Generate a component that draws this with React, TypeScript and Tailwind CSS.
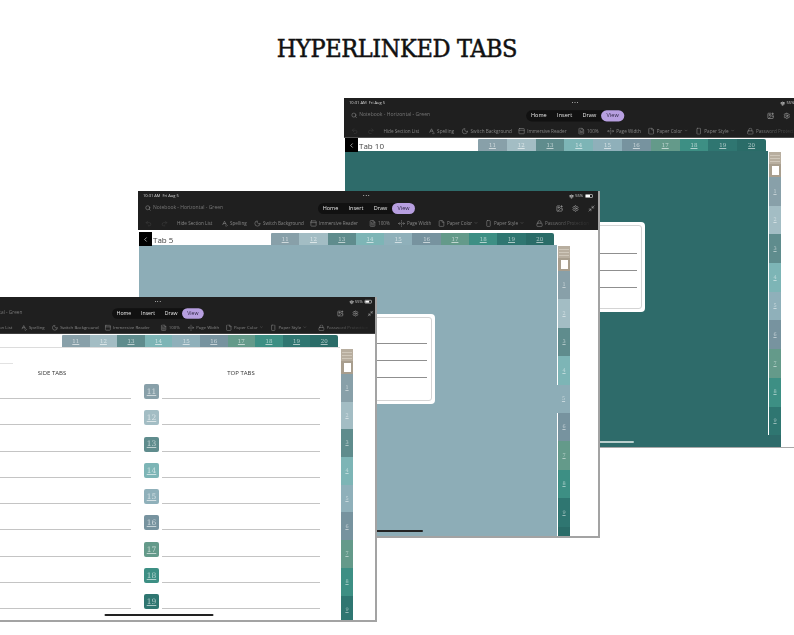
import { ReactNode } from "react";
import {
  ChevronDown,
  ChevronLeft,
  File,
  FileText,
  ImagePlus,
  Lock,
  Minimize2,
  Moon,
  PanelTop,
  Redo2,
  RectangleVertical,
  Search,
  Settings,
  SpellCheck,
  Undo2,
  UnfoldHorizontal,
  Wifi,
} from "lucide-react";

const uiFont = "[font-family:'Open_Sans',sans-serif]";
const slabFont = "[font-family:'DejaVu_Serif',serif]";

// tab colours, same order on top strip, side strip and the index page
const tabColors = [
  "bg-[#88a0a9]",
  "bg-[#a3bdc4]",
  "bg-[#5f8c8d]",
  "bg-[#7db5b6]",
  "bg-[#8fb0ba]",
  "bg-[#77939f]",
  "bg-[#649a8a]",
  "bg-[#3d8f84]",
  "bg-[#2f7671]",
  "bg-[#2a6c68]",
];

const tools = [
  { w: "w-[44px]", label: "Hide Section List" },
  { w: "w-[33px]", label: "Spelling", icon: <SpellCheck className="size-[7px]" /> },
  { w: "w-[56px]", label: "Switch Background", icon: <Moon className="size-[7px]" /> },
  { w: "w-[59px]", label: "Immersive Reader", icon: <PanelTop className="size-[7px]" /> },
  { w: "w-[29px]", label: "100%", icon: <FileText className="size-[7px]" /> },
  { w: "w-[40px]", label: "Page Width", icon: <UnfoldHorizontal className="size-[7px]" /> },
  { w: "w-[47px]", label: "Paper Color", icon: <File className="size-[7px]" />, menu: true },
  { w: "w-[51px]", label: "Paper Style", icon: <RectangleVertical className="size-[7px]" />, menu: true },
];

function Toolbar({ className = "" }: { className?: string }) {
  return (
    <div className={`w-[462px] h-[39px] shrink-0 bg-[#1f1f1f] flex flex-col ${uiFont} ${className}`}>
      <div className="h-[9px] flex items-center pl-[5px] pr-[7px] pt-[1px] text-[4px] text-[#d8d8d8]">
        <span className="w-[221px]">10:31 AM&nbsp; Fri Aug 5</span>
        <span className="w-[207px] tracking-[1px] leading-none">•••</span>
        <Wifi className="size-[5px] text-white mr-[1px]" strokeWidth={3} />
        <span className="mr-[2px]">55%</span>
        <span className="w-[8px] h-[4px] rounded-[1px] border-[0.5px] border-[#999] flex">
          <span className="w-[4px] bg-white" />
        </span>
      </div>
      <div className="h-[16px] flex items-center pl-[7px] text-[#777]">
        <Search className="size-[6px] text-[#999]" />
        <span className="ml-[2px] w-[165px] text-[5px]">Notebook - Horizontal - Green</span>
        <div className="w-[97px] h-[11px] rounded-full bg-[#111] flex items-center text-[5.5px] text-[#e6e6e6] text-center">
          <span className="w-[25px]">Home</span>
          <span className="w-[26px]">Insert</span>
          <span className="w-[23px]">Draw</span>
          <span className="w-[23px] h-[11px] leading-[11px] rounded-full bg-[#b79fe0] text-[#2b2340]">View</span>
        </div>
        <div className="ml-[141px] flex items-center gap-[9px] text-[#a8a8a8]">
          <ImagePlus className="size-[7px]" />
          <Settings className="size-[7px]" />
          <Minimize2 className="size-[7px]" />
        </div>
      </div>
      <div className="h-[14px] flex items-center pl-[7px] text-[4.6px] text-[#868686] whitespace-nowrap">
        <span className="w-[16px]">
          <Undo2 className="size-[7px] text-[#3c3c3c]" />
        </span>
        <span className="w-[16px]">
          <Redo2 className="size-[7px] text-[#3c3c3c]" />
        </span>
        {tools.map((t) => (
          <div key={t.label} className={`${t.w} flex items-center gap-[2px] shrink-0`}>
            {t.icon}
            <span>{t.label}</span>
            {t.menu && <ChevronDown className="size-[4px]" />}
          </div>
        ))}
        <div className="flex items-center gap-[2px] shrink-0">
          <Lock className="size-[7px]" />
          <span className="bg-gradient-to-r from-[#868686] to-[#2b2b2b] bg-clip-text text-transparent">
            Password Protection
          </span>
        </div>
      </div>
    </div>
  );
}

function TopTabs({ className }: { className: string }) {
  return (
    <div className={`flex h-[12px] ${className}`}>
      {tabColors.map((c, i) => (
        <div
          key={i}
          className={`flex-1 ${c} flex items-center justify-center text-[5.5px] text-white/60 underline ${slabFont} ${
            i === 0 ? "rounded-tl-[1px]" : ""
          } ${i === 9 ? "rounded-tr-[2px]" : ""}`}
        >
          {i + 11}
        </div>
      ))}
    </div>
  );
}

function SideTabs({
  className,
  tabH,
  active,
  activeBg = "",
}: {
  className: string;
  tabH: string;
  active?: number;
  activeBg?: string;
}) {
  return (
    <div className={`w-[13px] shrink-0 flex flex-col items-end overflow-hidden ${className}`}>
      <div className="h-[12px] w-[12px] shrink-0 bg-[#b8ae9f] flex flex-col justify-center gap-[2px] px-[1px]">
        <div className="h-px bg-[#cfc7ba]" />
        <div className="h-px bg-[#cfc7ba]" />
        <div className="h-px bg-[#cfc7ba]" />
      </div>
      <div className="h-[13px] w-[12px] shrink-0 bg-[#a89e8e] flex items-center justify-center">
        <div className="w-[7px] h-[9px] bg-white" />
      </div>
      {tabColors.map((c, i) => (
        <div
          key={i}
          className={`${tabH} shrink-0 flex items-center justify-center text-[5px] text-white/50 underline ${slabFont} ${
            active === i ? `${activeBg} w-[13px]` : `${c} w-[12px]`
          }`}
        >
          {i < 9 ? i + 1 : ""}
        </div>
      ))}
    </div>
  );
}

function Card({ linesTop }: { linesTop: string }) {
  return (
    <div className="w-[170px] h-[90px] bg-white rounded-[4px] p-[3px] shrink-0">
      <div className={`h-full rounded-[3px] border border-[#d4d4d4] pr-[4px] flex flex-col gap-[16px] ${linesTop}`}>
        <div className="h-px bg-[#8f8f8f]" />
        <div className="h-px bg-[#8f8f8f]" />
        <div className="h-px bg-[#8f8f8f]" />
      </div>
    </div>
  );
}

function IndexRow({ n, c }: { n?: number; c: string }) {
  return (
    <div className="flex items-start w-[176px] h-[26.3px]">
      <div
        className={`size-[15px] shrink-0 rounded-[2px] ${c} flex items-center justify-center text-[7.5px] text-white/60 underline ${slabFont}`}
      >
        {n}
      </div>
      <div className="w-[158px] h-[15px] ml-[3px] border-b-[1.5px] border-[#c4c4c4]" />
    </div>
  );
}

function IndexColumn({ title, start }: { title: string; start?: number }) {
  return (
    <div className="w-[176px]">
      <div className={`ml-[18px] w-[158px] h-[13px] text-center text-[6px] leading-[13px] text-[#333] ${uiFont}`}>
        {title}
      </div>
      <div className="mt-[4px]">
        {tabColors.slice(0, 9).map((c, i) => (
          <IndexRow key={i} n={start ? start + i : undefined} c={c} />
        ))}
      </div>
    </div>
  );
}

function Window({ className, children }: { className: string; children: ReactNode }) {
  return <div className={`absolute flex flex-col bg-white overflow-hidden blur-[0.3px] ${className}`}>{children}</div>;
}

function BackButton() {
  return (
    <div className="w-[13px] h-[14px] bg-black text-white flex items-center justify-center shrink-0 -mb-[1px] relative">
      <ChevronLeft className="size-[7px]" />
    </div>
  );
}

function Indicator({ className }: { className: string }) {
  return <div className={`absolute bottom-[4px] left-1/2 -translate-x-1/2 h-[2px] rounded-full ${className}`} />;
}

export default function App() {
  return (
    <div className="relative w-[794px] h-[635px] overflow-hidden bg-white">
      <h1
        className={`pt-[34px] text-center text-[25px] leading-[30px] text-[#111] tracking-[-0.4px] [font-stretch:condensed] [-webkit-text-stroke:0.5px_#111] ${slabFont}`}
      >
        HYPERLINKED TABS
      </h1>

      {/* back window, tab 10 */}
      <Window className="left-[344px] top-[98px] w-[470px] h-[350px] border-b border-[#a8a8a8]">
        <Toolbar className="origin-top-left scale-x-[1.012] scale-y-[1.02]" />
        <div className="flex-1 flex pl-[1px] min-h-0 mt-[1px]">
          <div className="w-[423px] flex flex-col shrink-0">
            <div className="h-[13px] flex items-end shrink-0">
              <BackButton />
              <span className={`ml-[1px] text-[8px] leading-[11px] text-[#444] ${uiFont}`}>Tab 10</span>
              <TopTabs className="w-[288px] ml-auto mr-[2px]" />
            </div>
            <div className="flex-1 bg-[#2e6b6a] flex justify-end pt-[71px] pr-[123px]">
              <Card linesTop="pt-[27px]" />
            </div>
          </div>
          <SideTabs className="mt-[14px]" tabH="h-[28.7px]" active={9} activeBg="bg-[#2e6b6a]" />
        </div>
        <Indicator className="w-[110px] bg-[#b9cfcd]" />
      </Window>

      {/* middle window, tab 5 */}
      <Window className="left-[138px] top-[191px] w-[462px] h-[347px] border-r-2 border-b-2 border-[#a3a3a3]">
        <Toolbar />
        <div className="flex-1 flex pl-[1px] min-h-0">
          <div className="w-[418px] flex flex-col shrink-0">
            <div className="h-[15px] flex items-end shrink-0">
              <BackButton />
              <span className={`ml-[1px] text-[8px] leading-[11px] text-[#444] ${uiFont}`}>Tab 5</span>
              <TopTabs className="w-[283px] ml-auto mr-[3px]" />
            </div>
            <div className="flex-1 bg-[#8dadb7] flex justify-end pt-[69px] pr-[122px]">
              <Card linesTop="pt-[25px]" />
            </div>
          </div>
          <SideTabs className="mt-[16px]" tabH="h-[28.4px]" active={4} activeBg="bg-[#8dadb7]" />
        </div>
        <Indicator className="w-[110px] bg-[#222]" />
      </Window>

      {/* front window, index page */}
      <Window className="-left-[58px] top-[297px] w-[435px] h-[325px] border-r-2 border-b-2 border-[#a3a3a3]">
        <div className="h-[37px] shrink-0">
          <Toolbar className="origin-top-left scale-[0.945]" />
        </div>
        <div className="flex-1 flex min-h-0">
          <div className="w-[398px] flex flex-col shrink-0">
            <div className="h-[14px] flex items-end shrink-0 border-b border-[#dcdcdc]">
              <TopTabs className="w-[276px] ml-auto mr-[2px]" />
            </div>
            <div className="flex-1 pl-[13px]">
              <div className="w-[58px] h-px bg-[#e2e2e2] mt-[15px]" />
              <div className="flex gap-[13px] mt-[3px]">
                <IndexColumn title="SIDE TABS" />
                <IndexColumn title="TOP TABS" start={11} />
              </div>
            </div>
          </div>
          <SideTabs className="mt-[15px]" tabH="h-[27.7px]" />
        </div>
        <Indicator className="w-[109px] bg-[#222]" />
      </Window>
    </div>
  );
}
